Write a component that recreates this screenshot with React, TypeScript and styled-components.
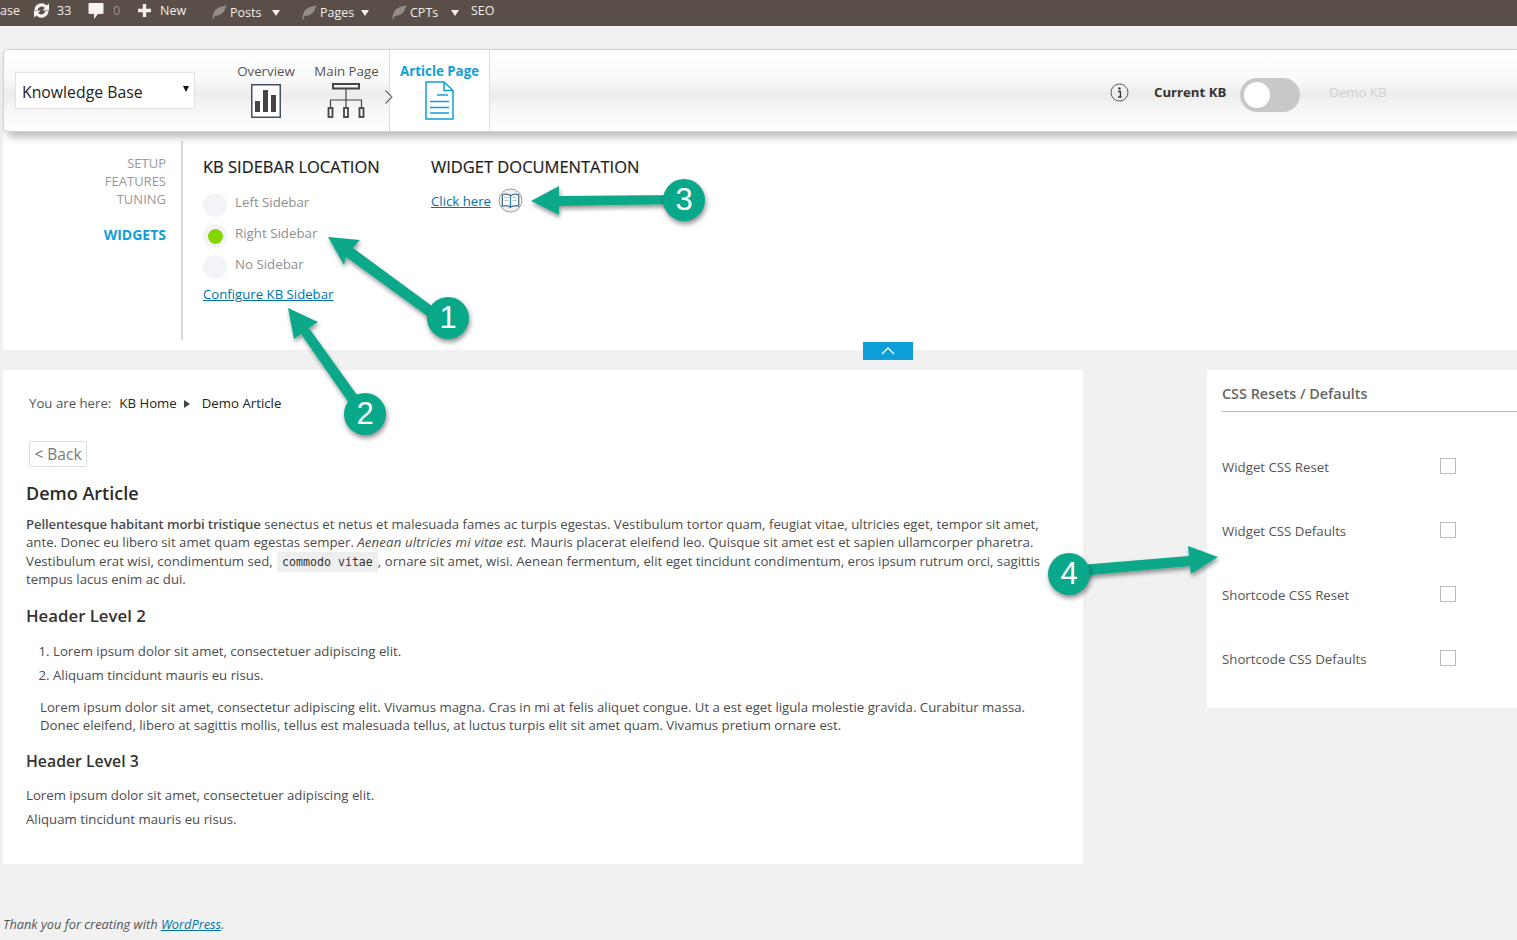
import React from "react";
import styled, { createGlobalStyle } from "styled-components";

const FONT = `"Open Sans", "Noto Sans", "Liberation Sans", sans-serif`;

const Global = createGlobalStyle`
  html, body { margin: 0; padding: 0; background: #f1f1f1; overflow: hidden; }
  body { font-family: ${FONT}; color: #444; }
  #root { height: 940px; overflow: hidden; position: relative; }
  * { box-sizing: border-box; }
`;

const Page = styled.div`
  position: relative;
  width: 1517px;
  height: 940px;
  display: flex;
  flex-direction: column;
  overflow: hidden;
`;

const AdminBar = styled.div`
  height: 26px;
  background: #5a4e48;
  color: #f0eeec;
  font-size: 12.5px;
  display: flex;
  align-items: flex-start;
  flex: none;
`;
const BarItem = styled.div<{ $w: number; $dim?: boolean; $drop?: number; $gap?: number }>`
  width: ${(p) => p.$w}px;
  flex: none;
  height: 21px;
  display: flex;
  align-items: center;
  gap: ${(p) => p.$gap ?? 6}px;
  white-space: nowrap;
  margin-top: ${(p) => p.$drop ?? 0}px;
  color: ${(p) => (p.$dim ? "#9a928c" : "#f0eeec")};
`;
const Caret = styled.span<{ $left: number }>`
  width: 0;
  height: 0;
  margin-left: ${(p) => p.$left}px;
  border-left: 4px solid transparent;
  border-right: 4px solid transparent;
  border-top: 6px solid #f4f2f0;
`;

const Header = styled.div`
  margin: 23px 0 0 3px;
  height: 83px;
  flex: none;
  display: flex;
  align-items: stretch;
  background: linear-gradient(#fff 0%, #fafafa 35%, #ececec 55%, #f6f6f6 72%, #fff 100%);
  border: 1px solid #d2d2d2;
  border-right: none;
  border-radius: 5px 0 0 5px;
  box-shadow: 4px 5px 8px rgba(0, 0, 0, 0.28);
  position: relative;
  z-index: 2;
`;
const SelectBox = styled.div`
  width: 180px;
  height: 37px;
  margin: 22px 42px 0 11px;
  background: #fff;
  border: 1px solid #e2e2e2;
  display: flex;
  justify-content: space-between;
  padding: 0 5px 0 6px;
  font-size: 15.8px;
  line-height: 38px;
  color: #222;
`;
const SelectArrow = styled.span`
  width: 0;
  height: 0;
  margin-top: 13px;
  border-left: 3px solid transparent;
  border-right: 3px solid transparent;
  border-top: 6px solid #111;
`;
const Tab = styled.div<{ $active?: boolean; $w: number; $gap?: number }>`
  width: ${(p) => p.$w}px;
  margin-right: ${(p) => p.$gap ?? 0}px;
  display: flex;
  flex-direction: column;
  align-items: center;
  padding-top: 12px;
  font-size: 13.3px;
  line-height: 18px;
  font-weight: ${(p) => (p.$active ? 700 : 400)};
  color: ${(p) => (p.$active ? "#0f9fd8" : "#555")};
  white-space: nowrap;
  ${(p) => p.$active && "background:#fff;border-left:1px solid #ddd;border-right:1px solid #ddd;"}
`;
const TabIcon = styled.svg<{ $top?: number; $left?: number }>`
  display: block;
  margin-top: ${(p) => p.$top ?? 3}px;
  margin-left: ${(p) => p.$left ?? 0}px;
  flex: none;
`;
const Chevron = styled.svg`
  width: 10px;
  align-self: center;
  margin: 12px -5px 0 0;
  flex: none;
  position: relative;
  z-index: 1;
`;
const HeaderRight = styled.div`
  flex: 1;
  display: flex;
  align-items: center;
  padding: 3px 0 0 620px;
  font-size: 13.2px;
  white-space: nowrap;
`;
const InfoIcon = styled.svg`
  margin-right: 25px;
`;
const CurrentLabel = styled.span`
  font-weight: 700;
  color: #333;
  margin-right: 14px;
`;
const Toggle = styled.span`
  width: 60px;
  height: 34px;
  border-radius: 17px;
  background: #c8c8c8;
  padding: 4px;
  margin: 6px 29px 0 0;
  flex: none;
`;
const Knob = styled.span`
  display: block;
  width: 26px;
  height: 26px;
  border-radius: 50%;
  background: #fff;
`;
const DemoLabel = styled.span`
  color: #d0d0d0;
`;

const Settings = styled.div`
  margin-left: 3px;
  height: 218px;
  flex: none;
  background: #fff;
  display: flex;
  padding-top: 9px;
  position: relative;
`;
const SideNav = styled.div`
  width: 180px;
  height: 199px;
  padding: 13px 15px 0 0;
  border-right: 2px solid #d8d8d8;
  text-align: right;
  font-size: 13px;
  line-height: 18px;
  color: #999;
  flex: none;
`;
const NavActive = styled.div`
  margin-top: 18px;
  font-size: 14px;
  font-weight: 700;
  color: #0f9fd8;
`;
const Col = styled.div<{ $w: number; $left?: number }>`
  width: ${(p) => p.$w}px;
  margin-left: ${(p) => p.$left ?? 0}px;
  padding-top: 15px;
  flex: none;
`;
const ColHead = styled.div`
  font-size: 16.5px;
  line-height: 22px;
  color: #1c1c1c;
  -webkit-text-stroke: 0.2px #1c1c1c;
  white-space: nowrap;
`;
const RadioList = styled.div`
  margin-top: 11px;
  display: flex;
  flex-direction: column;
  gap: 5px;
`;
const RadioRow = styled.div`
  height: 26px;
  display: flex;
  align-items: center;
  gap: 8px;
  font-size: 13.3px;
  color: #8f8f8f;
`;
const RadioDot = styled.span<{ $on?: boolean }>`
  width: 24px;
  height: 24px;
  border-radius: 50%;
  background: #f3f4f8;
  display: flex;
  align-items: center;
  justify-content: center;
  margin-top: 6px;
  flex: none;
  &::after {
    content: "";
    display: ${(p) => (p.$on ? "block" : "none")};
    width: 15px;
    height: 15px;
    border-radius: 50%;
    background: #84d400;
  }
`;
const TextLink = styled.a`
  color: #0073aa;
  text-decoration: underline;
  font-size: 13.2px;
`;
const ConfigRow = styled.div`
  margin-top: 6px;
  line-height: 20px;
`;
const DocRow = styled.div`
  margin-top: 10px;
  display: flex;
  align-items: center;
  gap: 7px;
`;
const CollapseTab = styled.div`
  position: absolute;
  left: 860px;
  top: 210px;
  width: 50px;
  height: 18px;
  background: #0f9fd8;
  display: flex;
  align-items: center;
  justify-content: center;
`;

const Columns = styled.div`
  margin: 20px 0 0 3px;
  display: flex;
  align-items: flex-start;
  flex: none;
`;
const Article = styled.div`
  width: 1080px;
  height: 494px;
  background: #fff;
  padding: 24px 23px 0;
  font-size: 13.23px;
  line-height: 18.3px;
  color: #4c4c4c;
  flex: none;
  & strong { font-weight: 600; letter-spacing: -0.14px; }
  & em { letter-spacing: 0.15px; }
`;
const Crumbs = styled.div`
  display: flex;
  align-items: center;
  padding-left: 3px;
  color: #222;
  height: 18px;
`;
const CrumbLead = styled.span`
  color: #555;
  margin-right: 8px;
`;
const CrumbArrow = styled.span`
  width: 0;
  height: 0;
  margin: 1px 12px 0 7px;
  border-top: 4px solid transparent;
  border-bottom: 4px solid transparent;
  border-left: 6px solid #444;
`;
const BackButton = styled.div`
  margin: 29px 0 0 3px;
  width: 58px;
  height: 26px;
  border: 1px solid #ddd;
  border-radius: 2px;
  font-size: 15.5px;
  line-height: 24px;
  text-align: center;
  color: #777;
`;
const H1 = styled.h1`
  margin: 13px 0 0;
  font-size: 18px;
  line-height: 26px;
  font-weight: 600;
  color: #2b2b2b;
`;
const H2 = styled.h2`
  margin: 16px 0 0;
  font-size: 16.8px;
  line-height: 24px;
  font-weight: 600;
  color: #333;
`;
const H3 = styled.h3`
  margin: 14px 0 0;
  font-size: 15.8px;
  line-height: 24px;
  font-weight: 600;
  color: #333;
`;
const Para = styled.p<{ $top?: number; $indent?: number }>`
  margin: ${(p) => p.$top ?? 0}px 0 0;
  padding-left: ${(p) => p.$indent ?? 0}px;
  white-space: nowrap;
`;
const Code = styled.code`
  font-family: "DejaVu Sans Mono", "Liberation Mono", monospace;
  font-size: 11.6px;
  line-height: 1;
  background: #eee;
  padding: 3px 5px;
  margin: 0 0 0 1px;
  color: #333;
`;
const OL = styled.ol`
  margin: 14px 0 0;
  padding: 0 0 0 27px;
  & li { height: 24px; line-height: 18px; }
`;
const Panel = styled.div`
  margin-left: 124px;
  width: 310px;
  height: 338px;
  background: #fff;
  padding: 14px 0 0 15px;
  flex: none;
`;
const PanelHead = styled.div`
  height: 28px;
  border-bottom: 1px solid #bbb;
  font-size: 14.4px;
  line-height: 19px;
  font-weight: 600;
  color: #666;
`;
const PanelRows = styled.div`
  margin-top: 43px;
  display: flex;
  flex-direction: column;
  gap: 40px;
`;
const PanelRow = styled.div`
  display: flex;
  align-items: center;
  height: 24px;
  font-size: 13.25px;
  color: #555;
`;
const RowLabel = styled.span`
  width: 218px;
`;
const Check = styled.span`
  width: 16px;
  height: 16px;
  border: 1px solid #bbb;
  margin-top: -3px;
`;
const Footer = styled.div`
  margin: 51px 0 0 3px;
  font-size: 12.8px;
  font-style: italic;
  color: #555;
  & a { color: #0073aa; text-decoration: underline; }
`;

const Overlay = styled.svg`
  position: absolute;
  left: 0;
  top: 0;
  width: 1517px;
  height: 940px;
  z-index: 5;
  pointer-events: none;
`;
const Badge = styled.div<{ $x: number; $y: number }>`
  position: absolute;
  left: ${(p) => p.$x - 21}px;
  top: ${(p) => p.$y - 21}px;
  width: 42px;
  height: 42px;
  border-radius: 50%;
  background: #0aa88a;
  color: #fff;
  font-family: "Liberation Sans", Arial, sans-serif;
  font-size: 31px;
  line-height: 42px;
  text-align: center;
  box-shadow: 1px 3px 5px rgba(0, 0, 0, 0.45);
  z-index: 6;
`;

const Feather = () => (
  <svg width="15" height="15" viewBox="0 0 15 15">
    <path d="M0.5 14.5 C0.5 12 1 9 2 7 C3.5 3.5 8 1.5 14.5 0.5 C14 2 13.5 3.5 12.5 4 L13 4.5 C12 7 10 9 7.5 10 C5.5 10.8 3.5 10.8 2.5 11 L1.5 14.5 Z" fill="#928d89" />
  </svg>
);

const arrows = [
  "M328,237 L360,240 L353,248 L447,317 L441,326 L346,257 L344,265 Z",
  "M288,308 L318,322 L309,328 L367,409 L358,416 L301,334 L294,339 Z",
  "M531,201 L559,186 L559,196 L683,195 L683,204 L559,206 L559,215 Z",
  "M1218,557 L1188,546 L1189,556 L1068,566 L1069,577 L1190,566 L1191,574 Z",
];

export default function App() {
  return (
    <Page>
      <Global />
      <AdminBar>
        <BarItem $w={32}>ase</BarItem>
        <BarItem $w={56}>
          <svg width="19" height="17" viewBox="0 0 19 17">
            <path d="M2.5 8 A7 7 0 0 1 14.5 3.5 L17 1.5 L17 8.5 L10.5 8.5 L12.8 6 A4.2 4.2 0 0 0 5.5 8 Z M16.5 9 A7 7 0 0 1 4.5 13.5 L2 15.5 L2 8.5 L8.5 8.5 L6.2 11 A4.2 4.2 0 0 0 13.5 9 Z" fill="#f6f4f2" />
          </svg>
          33
        </BarItem>
        <BarItem $w={49} $dim $gap={9}>
          <svg width="16" height="18" viewBox="0 0 16 18">
            <path d="M1.5 1 H14.5 Q15.5 1 15.5 2 V11 Q15.5 12 14.5 12 H10 L6 17 V12 H1.5 Q0.5 12 0.5 11 V2 Q0.5 1 1.5 1 Z" fill="#f6f4f2" />
          </svg>
          0
        </BarItem>
        <BarItem $w={75} $gap={8}>
          <svg width="15" height="15" viewBox="0 0 15 15">
            <path d="M5.8 1 H9.2 V5.8 H14 V9.2 H9.2 V14 H5.8 V9.2 H1 V5.8 H5.8 Z" fill="#f6f4f2" />
          </svg>
          New
        </BarItem>
        <BarItem $w={90} $drop={2} $gap={3}>
          <Feather />
          Posts
          <Caret $left={8} />
        </BarItem>
        <BarItem $w={90} $drop={2} $gap={3}>
          <Feather />
          Pages
          <Caret $left={4} />
        </BarItem>
        <BarItem $w={79} $drop={2} $gap={3}>
          <Feather />
          CPTs
          <Caret $left={10} />
        </BarItem>
        <BarItem $w={40}>SEO</BarItem>
      </AdminBar>

      <Header>
        <SelectBox>
          Knowledge Base
          <SelectArrow />
        </SelectBox>
        <Tab $w={58} $gap={19}>
          Overview
          <TabIcon $top={4} width="30" height="34" viewBox="0 0 30 34">
            <rect x="0.75" y="0.75" width="28.5" height="32.5" fill="#fff" stroke="#45515e" strokeWidth="1.5" />
            <rect x="4" y="17" width="5" height="11" fill="#444" />
            <rect x="12" y="6" width="5" height="22" fill="#444" />
            <rect x="20" y="11" width="5" height="17" fill="#444" />
          </TabIcon>
        </Tab>
        <Tab $w={65} $gap={5}>
          Main Page
          <TabIcon $left={-2} width="38" height="35" viewBox="0 0 38 35" fill="none" stroke="#444">
            <rect x="6" y="1" width="26" height="4.5" strokeWidth="2" />
            <path d="M19 5.5 V17 M3.5 25 V17 H34.5 V25 M19 17 V25" strokeWidth="1.2" />
            <rect x="1.5" y="25" width="4" height="9" strokeWidth="1.8" />
            <rect x="17" y="25" width="4" height="9" strokeWidth="1.8" />
            <rect x="32.5" y="25" width="4" height="9" strokeWidth="1.8" />
          </TabIcon>
        </Tab>
        <Chevron height="16" viewBox="0 0 10 16" fill="none" stroke="#666">
          <path d="M1.5 1.5 L8 8 L1.5 14.5" strokeWidth="1.1" />
        </Chevron>
        <Tab $w={101} $active>
          Article Page
          <TabIcon $top={1} width="29" height="39" viewBox="0 0 29 39" fill="none" stroke="#0f9fd8">
            <path d="M1 1 H19 L28 9.5 V38 H1 Z M19 1 V9.5 H28" strokeWidth="1.5" />
            <path d="M12 14 H23 M5 20.5 H24 M5 26.5 H24 M5 32 H24" strokeWidth="1.3" />
          </TabIcon>
        </Tab>
        <HeaderRight>
          <InfoIcon width="19" height="19" viewBox="0 0 19 19" fill="none">
            <circle cx="9.5" cy="9.5" r="8.5" stroke="#555" />
            <circle cx="9.5" cy="5.5" r="1.2" fill="#333" />
            <path d="M8 8.5 H10.4 V13.5 M8 14 H11.5" stroke="#333" strokeWidth="1.3" />
          </InfoIcon>
          <CurrentLabel>Current KB</CurrentLabel>
          <Toggle>
            <Knob />
          </Toggle>
          <DemoLabel>Demo KB</DemoLabel>
        </HeaderRight>
      </Header>

      <Settings>
        <SideNav>
          <div>SETUP</div>
          <div>FEATURES</div>
          <div>TUNING</div>
          <NavActive>WIDGETS</NavActive>
        </SideNav>
        <Col $w={228} $left={20}>
          <ColHead>KB SIDEBAR LOCATION</ColHead>
          <RadioList>
            <RadioRow>
              <RadioDot />
              Left Sidebar
            </RadioRow>
            <RadioRow>
              <RadioDot $on />
              Right Sidebar
            </RadioRow>
            <RadioRow>
              <RadioDot />
              No Sidebar
            </RadioRow>
          </RadioList>
          <ConfigRow>
            <TextLink>Configure KB Sidebar</TextLink>
          </ConfigRow>
        </Col>
        <Col $w={300}>
          <ColHead>WIDGET DOCUMENTATION</ColHead>
          <DocRow>
            <TextLink>Click here</TextLink>
            <svg width="25" height="25" viewBox="0 0 26 26" fill="none">
              <circle cx="13" cy="13" r="12" fill="#f0f0f0" stroke="#999" />
              <path d="M13 8 C10 6 7 6 4.5 7 V19 C7 18 10 18 13 20 C16 18 19 18 21.5 19 V7 C19 6 16 6 13 8 Z" stroke="#47708c" strokeWidth="1.3" fill="#fff" />
              <path d="M13 8 V20" stroke="#2f7fa8" strokeWidth="1.3" />
              <path d="M7 10 H11 M7 13 H11 M15 10 H19 M15 13 H19" stroke="#9ab" strokeWidth="0.8" />
            </svg>
          </DocRow>
        </Col>
        <CollapseTab>
          <svg width="14" height="8" viewBox="0 0 14 8" fill="none">
            <path d="M1 7 L7 1 L13 7" stroke="#fff" strokeWidth="1.3" />
          </svg>
        </CollapseTab>
      </Settings>

      <Columns>
        <Article>
          <Crumbs>
            <CrumbLead>You are here:</CrumbLead>
            KB Home
            <CrumbArrow />
            Demo Article
          </Crumbs>
          <BackButton>&lt; Back</BackButton>
          <H1>Demo Article</H1>
          <Para $top={9}>
            <strong>Pellentesque habitant morbi tristique</strong> senectus et netus et malesuada fames ac turpis egestas. Vestibulum tortor quam, feugiat vitae, ultricies eget, tempor sit amet,
            <br />
            ante. Donec eu libero sit amet quam egestas semper. <em>Aenean ultricies mi vitae est.</em> Mauris placerat eleifend leo. Quisque sit amet est et sapien ullamcorper pharetra.
            <br />
            Vestibulum erat wisi, condimentum sed, <Code>commodo vitae</Code>, ornare sit amet, wisi. Aenean fermentum, elit eget tincidunt condimentum, eros ipsum rutrum orci, sagittis
            <br />
            tempus lacus enim ac dui.
          </Para>
          <H2>Header Level 2</H2>
          <OL>
            <li>Lorem ipsum dolor sit amet, consectetuer adipiscing elit.</li>
            <li>Aliquam tincidunt mauris eu risus.</li>
          </OL>
          <Para $top={8} $indent={14}>
            Lorem ipsum dolor sit amet, consectetur adipiscing elit. Vivamus magna. Cras in mi at felis aliquet congue. Ut a est eget ligula molestie gravida. Curabitur massa.
            <br />
            Donec eleifend, libero at sagittis mollis, tellus est malesuada tellus, at luctus turpis elit sit amet quam. Vivamus pretium ornare est.
          </Para>
          <H3>Header Level 3</H3>
          <Para $top={13}>Lorem ipsum dolor sit amet, consectetuer adipiscing elit.</Para>
          <Para $top={6}>Aliquam tincidunt mauris eu risus.</Para>
        </Article>
        <Panel>
          <PanelHead>CSS Resets / Defaults</PanelHead>
          <PanelRows>
            {["Widget CSS Reset", "Widget CSS Defaults", "Shortcode CSS Reset", "Shortcode CSS Defaults"].map((t) => (
              <PanelRow key={t}>
                <RowLabel>{t}</RowLabel>
                <Check />
              </PanelRow>
            ))}
          </PanelRows>
        </Panel>
      </Columns>

      <Footer>
        Thank you for creating with <a>WordPress</a>.
      </Footer>

      <Overlay viewBox="0 0 1517 940">
        <defs>
          <filter id="s" x="-20%" y="-20%" width="140%" height="140%">
            <feDropShadow dx="1" dy="3" stdDeviation="2" floodColor="#000" floodOpacity="0.4" />
          </filter>
        </defs>
        {arrows.map((d) => (
          <path key={d} d={d} fill="#0aa88a" filter="url(#s)" />
        ))}
      </Overlay>
      <Badge $x={448} $y={318}>1</Badge>
      <Badge $x={365} $y={414}>2</Badge>
      <Badge $x={684} $y={200}>3</Badge>
      <Badge $x={1069} $y={574}>4</Badge>
    </Page>
  );
}
